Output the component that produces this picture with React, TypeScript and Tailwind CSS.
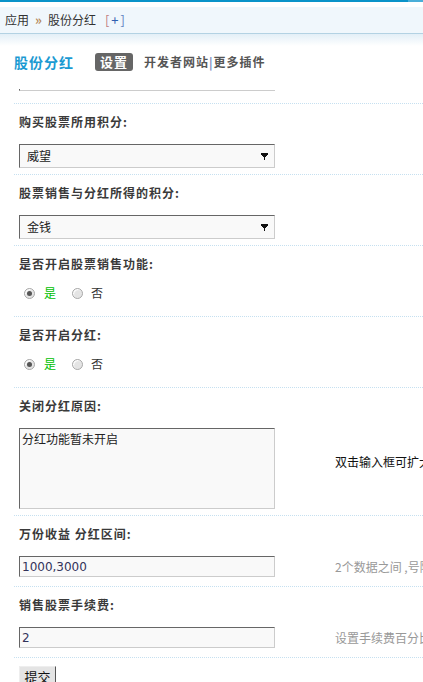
import type { ReactNode } from 'react';

const cjk = { fontFamily: '"Noto Sans CJK SC", "Liberation Sans", sans-serif' };

function Label({ children }: { children: ReactNode }) {
  return (
    <div className="h-[40px] pl-[5px] pt-[10px] text-[12px] leading-[16px] font-bold tracking-[1px] text-[#3a3a3a]">
      {children}:
    </div>
  );
}

function Row({
  label,
  tip,
  tipClass = 'text-[#999]',
  pad = 'pb-[6px]',
  children,
}: {
  label: string;
  tip?: string;
  tipClass?: string;
  pad?: string;
  children: ReactNode;
}) {
  return (
    <div className={`border-t border-dotted border-[#c6e0f0] ${pad}`}>
      <Label>{label}</Label>
      <div className="flex items-center">
        <div className="w-[321px] shrink-0 pl-[5px]">{children}</div>
        {tip && <div className={`whitespace-nowrap text-[12px] ${tipClass}`}>{tip}</div>}
      </div>
    </div>
  );
}

const boxClass =
  'w-[256px] border border-t-[#666] border-l-[#666] border-r-[#ccc] border-b-[#ccc] bg-[#f9f9f9] text-[12px]';

function Select({ value }: { value: string }) {
  return (
    <div className={`${boxClass} flex h-[24px] items-center justify-between pl-[7px] pr-[6px] text-[#222]`}>
      <span>{value}</span>
      <svg width="7" height="7" viewBox="0 0 7 7">
        <path d="M0 0h7v2H6v1H5v1H4v3H3V4H2V3H1V2H0z" fill="#111" />
      </svg>
    </div>
  );
}

function TextInput({ value }: { value: string }) {
  return (
    <div className={`${boxClass} flex h-[21px] items-center pl-[2px] text-[#33335a]`} style={{ fontFamily: '"DejaVu Sans", sans-serif' }}>
      {value}
    </div>
  );
}

function Radio({ checked }: { checked?: boolean }) {
  return (
    <span className="flex h-[11px] w-[11px] items-center justify-center rounded-full border border-[#a8a8a8] bg-[#e4e4e4] shadow-[inset_1px_1px_1px_#fff]">
      {checked && <span className="h-[5px] w-[5px] rounded-full bg-[#555]" />}
    </span>
  );
}

function YesNo() {
  return (
    <div className="flex h-[14px] items-center pl-[5px] text-[12px]">
      <Radio checked />
      <span className="ml-[9px] text-[#00c000]">是</span>
      <span className="ml-[16px]">
        <Radio />
      </span>
      <span className="ml-[8px] text-[#333]">否</span>
    </div>
  );
}

export default function App() {
  return (
    <div className="h-[682px] w-[423px] overflow-hidden bg-white" style={cjk}>
      <div className="flex h-[2px]">
        <div className="flex-1 bg-[#0a93c9]" />
        <div className="w-[15px] bg-[#4aaed8]" />
      </div>
      <div className="h-[5px]" />
      <div className="flex h-[27px] items-center border-b border-[#b3d2e3] bg-[#f0f7fc] pl-[5px] text-[12px] text-[#333]">
        应用
        <span className="mx-[6px] text-[13px] font-bold text-[#b68b5a]">»</span>
        股份分红
        <span className="ml-[9px] text-[13px] tracking-[2px] text-[#3060b0]">
          <span className="text-[#c08080]">[</span>+<span className="text-[#6080c0]">]</span>
        </span>
      </div>
      <div className="h-[12px] bg-gradient-to-b from-[#e3eff7] to-white" />

      <div className="mt-[7px] flex h-[18px] items-center pl-[14px]">
        <span className="text-[14px] font-bold tracking-[1px] text-[#1b9ad2]">股份分红</span>
        <span className="ml-[21px] flex h-[18px] w-[38px] items-center justify-center rounded-[3px] bg-[#666] text-[13px] font-bold tracking-[1px] text-white">
          设置
        </span>
        <span className="ml-[11px] text-[12px] font-bold tracking-[1px] text-[#555]">
          开发者网站<span className="text-[#7a8cc0]">|</span>更多插件
        </span>
      </div>

      <div className="ml-[14px] mt-[18px]">
        {/* tail of the field scrolled up above the list */}
        <div className="pb-[12px] pl-[5px]">
          <div className="h-[2px] w-[256px] border-b border-l border-b-[#ccc] border-l-[#666]" />
        </div>

        <Row label="购买股票所用积分">
          <Select value="威望" />
        </Row>
        <Row label="股票销售与分红所得的积分">
          <Select value="金钱" />
        </Row>
        <Row label="是否开启股票销售功能" pad="pb-[16px]">
          <YesNo />
        </Row>
        <Row label="是否开启分红" pad="pb-[16px]">
          <YesNo />
        </Row>
        <Row label="关闭分红原因" tip="双击输入框可扩大" tipClass="-mt-[14px] text-[#111]">
          <div className={`${boxClass} h-[81px] pl-[2px] pt-[2px] leading-[16px] text-[#222]`}>分红功能暂未开启</div>
        </Row>
        <Row label="万份收益 分红区间" tip="2个数据之间 ,号隔开" pad="pb-[9px]">
          <TextInput value="1000,3000" />
        </Row>
        <Row label="销售股票手续费" tip="设置手续费百分比" pad="pb-[9px]">
          <TextInput value="2" />
        </Row>
        <div className="border-t border-dotted border-[#c6e0f0] pl-[5px] pt-[5px]">
          <button className="h-[22px] w-[37px] border border-t-[#eee] border-l-[#eee] border-r-[#555] border-b-[#555] bg-[#e4e4e4] text-[13px] text-[#111]">
            提交
          </button>
        </div>
      </div>
    </div>
  );
}
